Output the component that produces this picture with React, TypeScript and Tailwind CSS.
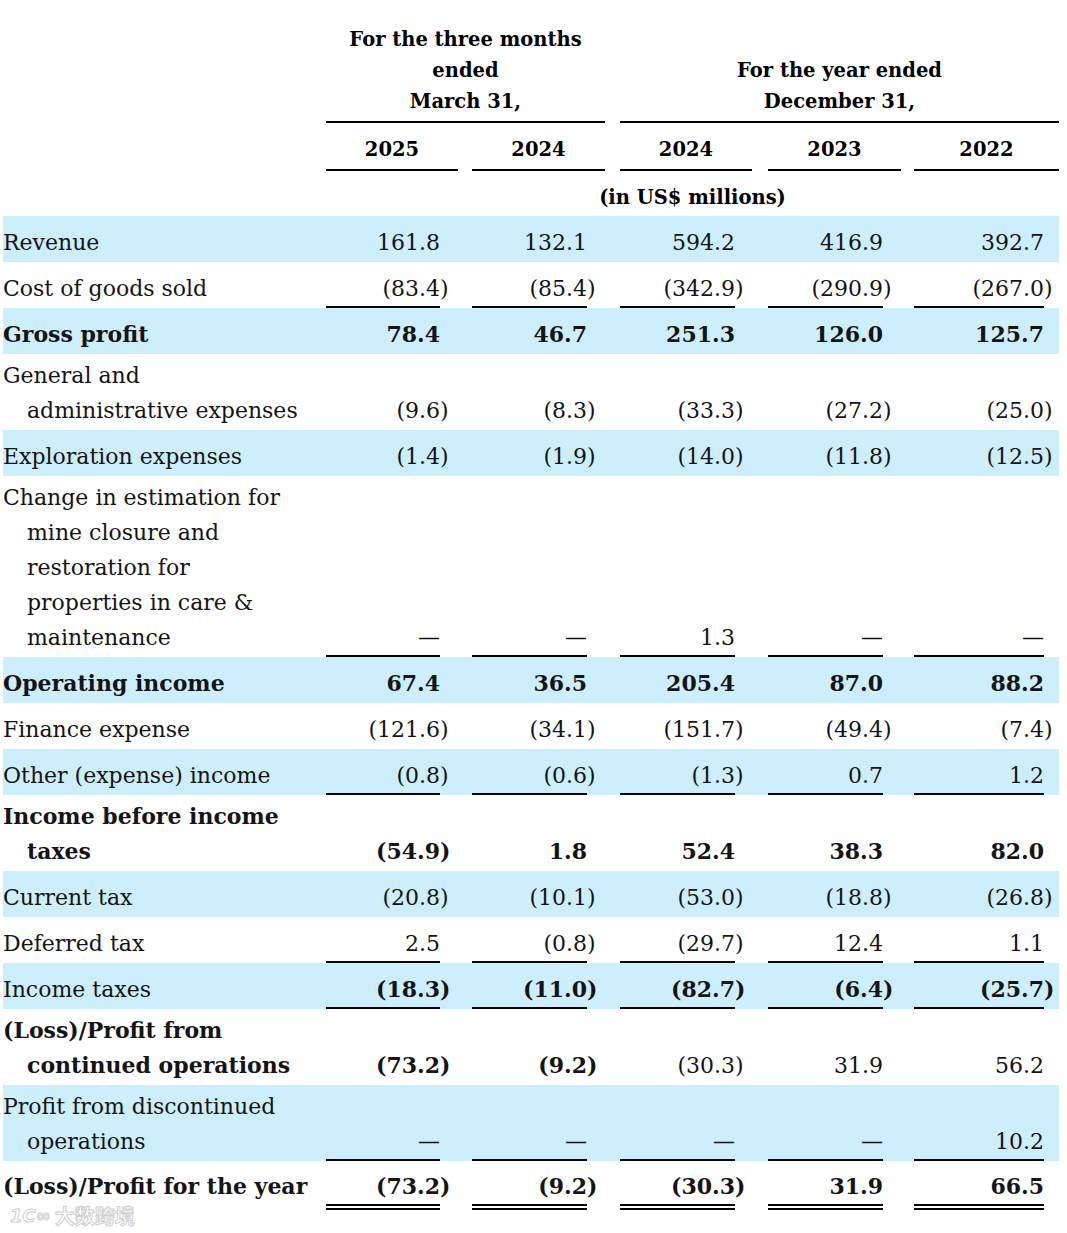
import React from "react";

const GRID =
  "grid grid-cols-[323px_114px_18px_14px_115px_18px_15px_115px_17px_16px_115px_18px_13px_130px_15px]";

type Row = {
  label: string[];
  labelBold?: boolean;
  shaded?: boolean;
  values: string[];
  bold?: boolean[] | boolean;
  underline?: boolean;
  double?: boolean;
};

const rows: Row[] = [
  { label: ["Revenue"], shaded: true, values: ["161.8", "132.1", "594.2", "416.9", "392.7"] },
  { label: ["Cost of goods sold"], values: ["(83.4)", "(85.4)", "(342.9)", "(290.9)", "(267.0)"], underline: true },
  { label: ["Gross profit"], labelBold: true, shaded: true, bold: true, values: ["78.4", "46.7", "251.3", "126.0", "125.7"] },
  { label: ["General and", "administrative expenses"], values: ["(9.6)", "(8.3)", "(33.3)", "(27.2)", "(25.0)"] },
  { label: ["Exploration expenses"], shaded: true, values: ["(1.4)", "(1.9)", "(14.0)", "(11.8)", "(12.5)"] },
  {
    label: ["Change in estimation for", "mine closure and", "restoration for", "properties in care &", "maintenance"],
    values: ["—", "—", "1.3", "—", "—"],
    underline: true,
  },
  { label: ["Operating income"], labelBold: true, shaded: true, bold: true, values: ["67.4", "36.5", "205.4", "87.0", "88.2"] },
  { label: ["Finance expense"], values: ["(121.6)", "(34.1)", "(151.7)", "(49.4)", "(7.4)"] },
  { label: ["Other (expense) income"], shaded: true, values: ["(0.8)", "(0.6)", "(1.3)", "0.7", "1.2"], underline: true },
  { label: ["Income before income", "taxes"], labelBold: true, bold: true, values: ["(54.9)", "1.8", "52.4", "38.3", "82.0"] },
  { label: ["Current tax"], shaded: true, values: ["(20.8)", "(10.1)", "(53.0)", "(18.8)", "(26.8)"] },
  { label: ["Deferred tax"], values: ["2.5", "(0.8)", "(29.7)", "12.4", "1.1"], underline: true },
  { label: ["Income taxes"], shaded: true, bold: true, values: ["(18.3)", "(11.0)", "(82.7)", "(6.4)", "(25.7)"], underline: true },
  {
    label: ["(Loss)/Profit from", "continued operations"],
    labelBold: true,
    bold: [true, true, false, false, false],
    values: ["(73.2)", "(9.2)", "(30.3)", "31.9", "56.2"],
  },
  { label: ["Profit from discontinued", "operations"], shaded: true, values: ["—", "—", "—", "—", "10.2"], underline: true },
  {
    label: ["(Loss)/Profit for the year"],
    labelBold: true,
    bold: true,
    values: ["(73.2)", "(9.2)", "(30.3)", "31.9", "66.5"],
    double: true,
  },
];

function BodyRow({ row }: { row: Row }) {
  const isBold = (i: number) => (Array.isArray(row.bold) ? row.bold[i] : !!row.bold);
  const cells: React.ReactNode[] = [];
  cells.push(
    <div
      key="label"
      className={`flex items-end ${row.double ? "pb-[6px]" : "pb-[2px]"} pl-[24px] ${row.labelBold ? "font-bold" : ""}`}
    >
      <div className="indent-[-24px]">
        {row.label.map((l, i) => (
          <React.Fragment key={i}>
            {i > 0 && <br />}
            {l}
          </React.Fragment>
        ))}
      </div>
    </div>
  );
  row.values.forEach((v, i) => {
    const neg = v.startsWith("(");
    const num = neg ? v.slice(0, -1) : v;
    const b = isBold(i) ? "font-bold" : "";
    const border = row.double
      ? "border-b-[6px] border-double border-black"
      : row.underline
      ? "border-b-2 border-black"
      : "pb-[2px]";
    cells.push(
      <div key={`n${i}`} className={`flex items-end justify-end ${border} ${b}`}>
        {num}
      </div>
    );
    cells.push(
      <div key={`p${i}`} className={`flex items-end ${row.double ? "pb-[6px]" : "pb-[2px]"} ${b}`}>
        {neg ? ")" : ""}
      </div>
    );
    if (i < 4) cells.push(<div key={`s${i}`} />);
  });
  return (
    <div
      className={`${GRID} ${row.double ? "min-h-[49px]" : "min-h-[46px]"} ${
        row.shaded ? "bg-[#cdeefd]" : ""
      } pt-[4px]`}
    >
      {cells}
    </div>
  );
}

export default function App() {
  return (
    <div className="relative w-[1067px] min-h-[1233px] bg-white text-[#141414] font-['DejaVu_Serif','Liberation_Serif',serif]">
      <div className="ml-[3px] w-[1056px]">
        {/* Header */}
        <div className="text-[19.5px] leading-[31px] font-bold text-black">
          <div className={`${GRID} h-[123px]`}>
            <div />
            <div className="col-span-5 flex flex-col items-center justify-end border-b-2 border-black pb-[4px] text-center">
              <div>For the three months</div>
              <div>ended</div>
              <div>March 31,</div>
            </div>
            <div />
            <div className="col-span-8 flex flex-col items-center justify-end border-b-2 border-black pb-[4px] text-center">
              <div>For the year ended</div>
              <div>December 31,</div>
            </div>
          </div>
          <div className={`${GRID} h-[48px]`}>
            <div />
            <div className="col-span-2 flex items-end justify-center border-b-2 border-black pb-[4px]">2025</div>
            <div />
            <div className="col-span-2 flex items-end justify-center border-b-2 border-black pb-[4px]">2024</div>
            <div />
            <div className="col-span-2 flex items-end justify-center border-b-2 border-black pb-[4px]">2024</div>
            <div />
            <div className="col-span-2 flex items-end justify-center border-b-2 border-black pb-[4px]">2023</div>
            <div />
            <div className="col-span-2 flex items-end justify-center border-b-2 border-black pb-[4px]">2022</div>
          </div>
          <div className={`${GRID} h-[45px]`}>
            <div />
            <div className="col-span-14 flex items-end justify-center pb-[3px]">(in US$ millions)</div>
          </div>
        </div>

        {/* Body */}
        <div className="text-[22px] leading-[35px]">
          {rows.map((r, i) => (
            <BodyRow key={i} row={r} />
          ))}
        </div>
      </div>

      {/* Watermark */}
      <div className="pointer-events-none absolute left-[10px] top-[1204px] flex items-center gap-[4px] text-[20px] font-bold leading-[24px] text-white/80 font-['Noto_Sans_CJK_SC',sans-serif] [-webkit-text-stroke:1px_#cfcfcf]">
        <span className="font-['DejaVu_Sans',sans-serif] text-[18px] italic">1C∞</span>
        <span>大数跨境</span>
      </div>
    </div>
  );
}
